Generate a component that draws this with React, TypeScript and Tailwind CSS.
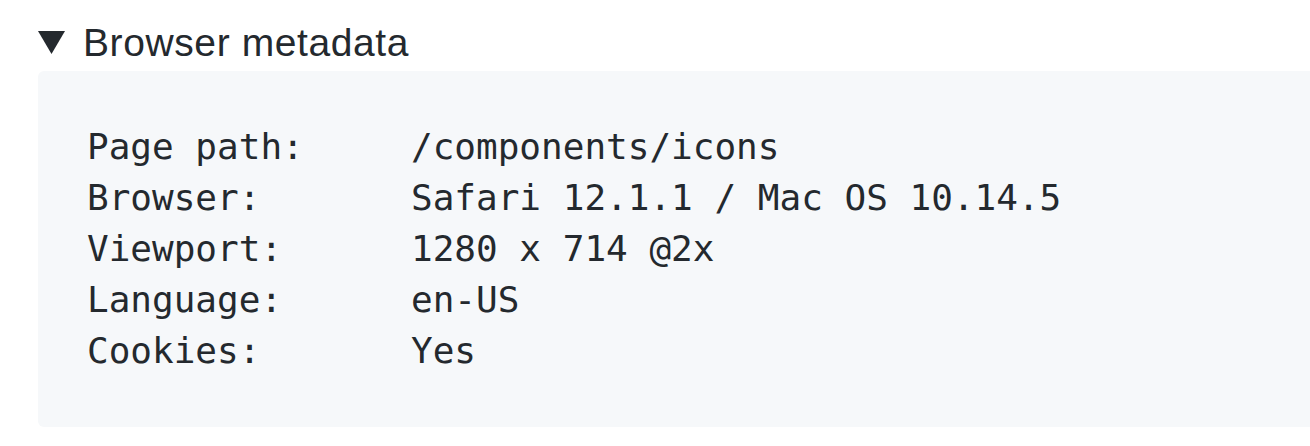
const rows: [string, string][] = [
  ["Page path:", "/components/icons"],
  ["Browser:", "Safari 12.1.1 / Mac OS 10.14.5"],
  ["Viewport:", "1280 x 714 @2x"],
  ["Language:", "en-US"],
  ["Cookies:", "Yes"],
];

export default function App() {
  return (
    <div className="w-[1310px] h-[446px] overflow-hidden bg-white text-[#24292e]">
      <div className="flex items-center pt-[14px] pl-[38px] h-[71px]">
        <svg width="27" height="23" viewBox="0 0 27 23" className="shrink-0">
          <polygon points="0,0 27,0 13.5,23" fill="#24292e" />
        </svg>
        <span className="ml-[18px] text-[39px] tracking-[0.6px] leading-[57px] font-['Liberation_Sans',Arial,sans-serif]">
          Browser metadata
        </span>
      </div>
      <div className="ml-[38px] w-[1300px] h-[356px] rounded-[6px] bg-[#f6f8fa] px-[49px] py-[50px]">
        <div className="font-['DejaVu_Sans_Mono',Menlo,monospace] text-[36px] leading-[51px]">
          {rows.map(([label, value]) => (
            <div key={label} className="flex whitespace-pre">
              <span className="w-[324px] shrink-0">{label}</span>
              <span>{value}</span>
            </div>
          ))}
        </div>
      </div>
    </div>
  );
}
